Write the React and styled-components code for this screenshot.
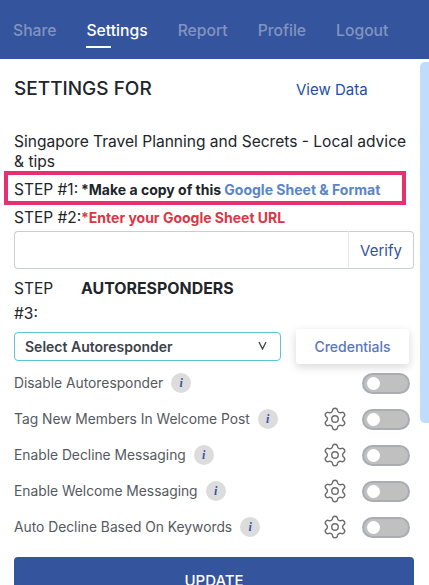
import React from "react";
import styled, { createGlobalStyle } from "styled-components";
import { Settings } from "lucide-react";

const Global = createGlobalStyle`
  html, body { margin: 0; padding: 0; height: 100%; overflow: hidden; background: #fff; }
  body { font-family: Inter, "Liberation Sans", sans-serif; -webkit-font-smoothing: antialiased; }
  * { box-sizing: border-box; }
`;

const Page = styled.div`
  width: 429px;
  height: 585px;
  overflow: hidden;
  display: flex;
  flex-direction: column;
`;
const Nav = styled.nav`
  height: 59px;
  flex: none;
  background: #35549e;
  display: flex;
  gap: 30px;
  padding: 21px 0 0 13px;
`;
const Tab = styled.a`
  position: relative;
  height: 27px;
  font-size: 15.7px;
  line-height: 20px;
  font-weight: 500;
  color: ${(p) => (p.$active ? "#ffffff" : "#8294bf")};
  &::after {
    content: "";
    display: ${(p) => (p.$active ? "block" : "none")};
    position: absolute;
    left: 0;
    bottom: 0;
    width: 25px;
    height: 2px;
    background: #fff;
  }
`;
const Body = styled.div`
  flex: 1;
  display: flex;
  min-height: 0;
`;
const Content = styled.main`
  width: 420px;
  flex: none;
  padding: 19px 6px 0 14px;
`;
const Track = styled.div`
  width: 9px;
  flex: none;
  padding-top: 3px;
`;
const Thumb = styled.div`
  height: 361px;
  background: #bfdcfb;
  border-radius: 5px 0 0 5px;
`;
const Header = styled.header`
  display: flex;
  align-items: center;
  height: 22px;
`;
const Title = styled.h1`
  margin: 0;
  width: 282px;
  font-size: 19px;
  font-weight: 500;
  line-height: 22px;
  color: #212529;
`;
const DataLink = styled.a`
  font-size: 15px;
  color: #1e4fa3;
`;
const Group = styled.p`
  margin: 32px 0 0;
  font-size: 15.55px;
  line-height: 20px;
  color: #212529;
`;
const Highlight = styled.div`
  margin: -1px 0 0 -10px;
  width: 402px;
  height: 34px;
  border: 4px solid #e6306f;
  padding: 3px 0 0 6px;
  display: flex;
  align-items: center;
`;
const Step = styled.div`
  display: flex;
  align-items: flex-start;
  min-height: 20px;
  margin-top: ${(p) => p.$top || 0}px;
`;
const StepLabel = styled.span`
  font-size: 15.5px;
  line-height: 25px;
  color: #212529;
  flex: none;
  width: 67px;
  white-space: nowrap;
`;
const Strong = styled.span`
  font-size: 14px;
  font-weight: 700;
  line-height: 25px;
  color: ${(p) => p.$color || "#212529"};
  white-space: nowrap;
`;
const SheetLink = styled.a`
  color: #5a84c8;
  font-weight: 700;
`;
const UrlRow = styled.div`
  display: flex;
  height: 38px;
  width: 400px;
  margin-top: 1px;
`;
const UrlInput = styled.input`
  flex: 1;
  min-width: 0;
  border: 1px solid #c9ced4;
  border-right: 0;
  border-radius: 4px 0 0 4px;
  background: #fff;
`;
const Verify = styled.button`
  width: 66px;
  background: #fff;
  border: 1px solid #c9ced4;
  border-left-color: #e6e8eb;
  border-radius: 0 4px 4px 0;
  font: 400 15px Inter, sans-serif;
  color: #35549e;
  padding: 0;
`;
const AutoTitle = styled.span`
  font-size: 15.9px;
  font-weight: 700;
  line-height: 25px;
  color: #212529;
`;
const Controls = styled.div`
  display: flex;
  align-items: center;
  margin-top: 3px;
  gap: 15px;
`;
const SelectBox = styled.div`
  width: 267px;
  height: 29px;
  border: 1px solid #5cc3d9;
  border-radius: 4px;
  padding: 0 10px;
  display: flex;
  align-items: center;
  justify-content: space-between;
  font-size: 14px;
  font-weight: 600;
  color: #3d4248;
`;
const Chevron = styled.svg`
  width: 9px;
  height: 9px;
  margin-right: 3px;
  margin-top: -2px;
  fill: none;
  stroke: #3d4248;
  stroke-width: 1.3;
`;
const CredButton = styled.button`
  width: 113px;
  height: 35px;
  border: 0;
  border-radius: 3px;
  background: #fff;
  box-shadow: 0 3px 10px rgba(0, 0, 0, 0.16);
  font: 500 14px Inter, sans-serif;
  color: #5b76bd;
  padding: 0;
`;
const List = styled.div`
  margin-top: 1px;
  width: 396px;
`;
const Row = styled.div`
  display: flex;
  align-items: center;
  height: 36px;
`;
const RowLabel = styled.span`
  font-size: 13.8px;
  font-weight: 400;
  color: #55595e;
  white-space: nowrap;
`;
const Info = styled.span`
  width: 20px;
  height: 20px;
  margin-left: 8px;
  border-radius: 50%;
  background: #dcdcdd;
  display: flex;
  align-items: center;
  justify-content: center;
  font: italic 700 12px "Liberation Serif", serif;
  color: #35549e;
`;
const Gear = styled(Settings)`
  margin-left: auto;
  color: #6d6d6d;
`;
const Toggle = styled.span`
  width: 48px;
  height: 21px;
  margin-left: ${(p) => (p.$alone ? "auto" : "14px")};
  border: 2px solid #a9adb2;
  border-radius: 11px;
  background: #c0c0c0;
  display: flex;
  align-items: center;
  padding-left: 3px;
`;
const Knob = styled.span`
  width: 13px;
  height: 13px;
  border-radius: 50%;
  background: #fff;
`;
const Update = styled.button`
  display: block;
  width: 400px;
  height: 46px;
  margin-top: 12px;
  border: 0;
  border-radius: 4px;
  background: #35549e;
  color: #fff;
  font: 500 15px Inter, sans-serif;
  padding: 0;
`;

const rows = [
  { label: "Disable Autoresponder", alone: true },
  { label: "Tag New Members In Welcome Post" },
  { label: "Enable Decline Messaging" },
  { label: "Enable Welcome Messaging" },
  { label: "Auto Decline Based On Keywords" },
];

export default function App() {
  return (
    <Page>
      <Global />
      <Nav>
        <Tab>Share</Tab>
        <Tab $active>Settings</Tab>
        <Tab>Report</Tab>
        <Tab>Profile</Tab>
        <Tab>Logout</Tab>
      </Nav>
      <Body>
        <Content>
          <Header>
            <Title>SETTINGS FOR</Title>
            <DataLink>View Data</DataLink>
          </Header>
          <Group>Singapore Travel Planning and Secrets - Local advice &amp; tips</Group>
          <Highlight>
            <StepLabel>STEP #1:</StepLabel>
            <Strong>
              *Make a copy of this <SheetLink>Google Sheet &amp; Format</SheetLink>
            </Strong>
          </Highlight>
          <Step>
            <StepLabel>STEP #2:</StepLabel>
            <Strong $color="#dc3545">*Enter your Google Sheet URL</Strong>
          </Step>
          <UrlRow>
            <UrlInput />
            <Verify>Verify</Verify>
          </UrlRow>
          <Step $top={7}>
            <StepLabel>
              STEP
              <br />
              #3:
            </StepLabel>
            <AutoTitle>AUTORESPONDERS</AutoTitle>
          </Step>
          <Controls>
            <SelectBox>
              Select Autoresponder
              <Chevron viewBox="0 0 9 9">
                <path d="M1 1l3.5 7L8 1" />
              </Chevron>
            </SelectBox>
            <CredButton>Credentials</CredButton>
          </Controls>
          <List>
            {rows.map((r) => (
              <Row key={r.label}>
                <RowLabel>{r.label}</RowLabel>
                <Info>i</Info>
                {!r.alone && <Gear size={26} strokeWidth={1.3} />}
                <Toggle $alone={r.alone}>
                  <Knob />
                </Toggle>
              </Row>
            ))}
          </List>
          <Update>UPDATE</Update>
        </Content>
        <Track>
          <Thumb />
        </Track>
      </Body>
    </Page>
  );
}
